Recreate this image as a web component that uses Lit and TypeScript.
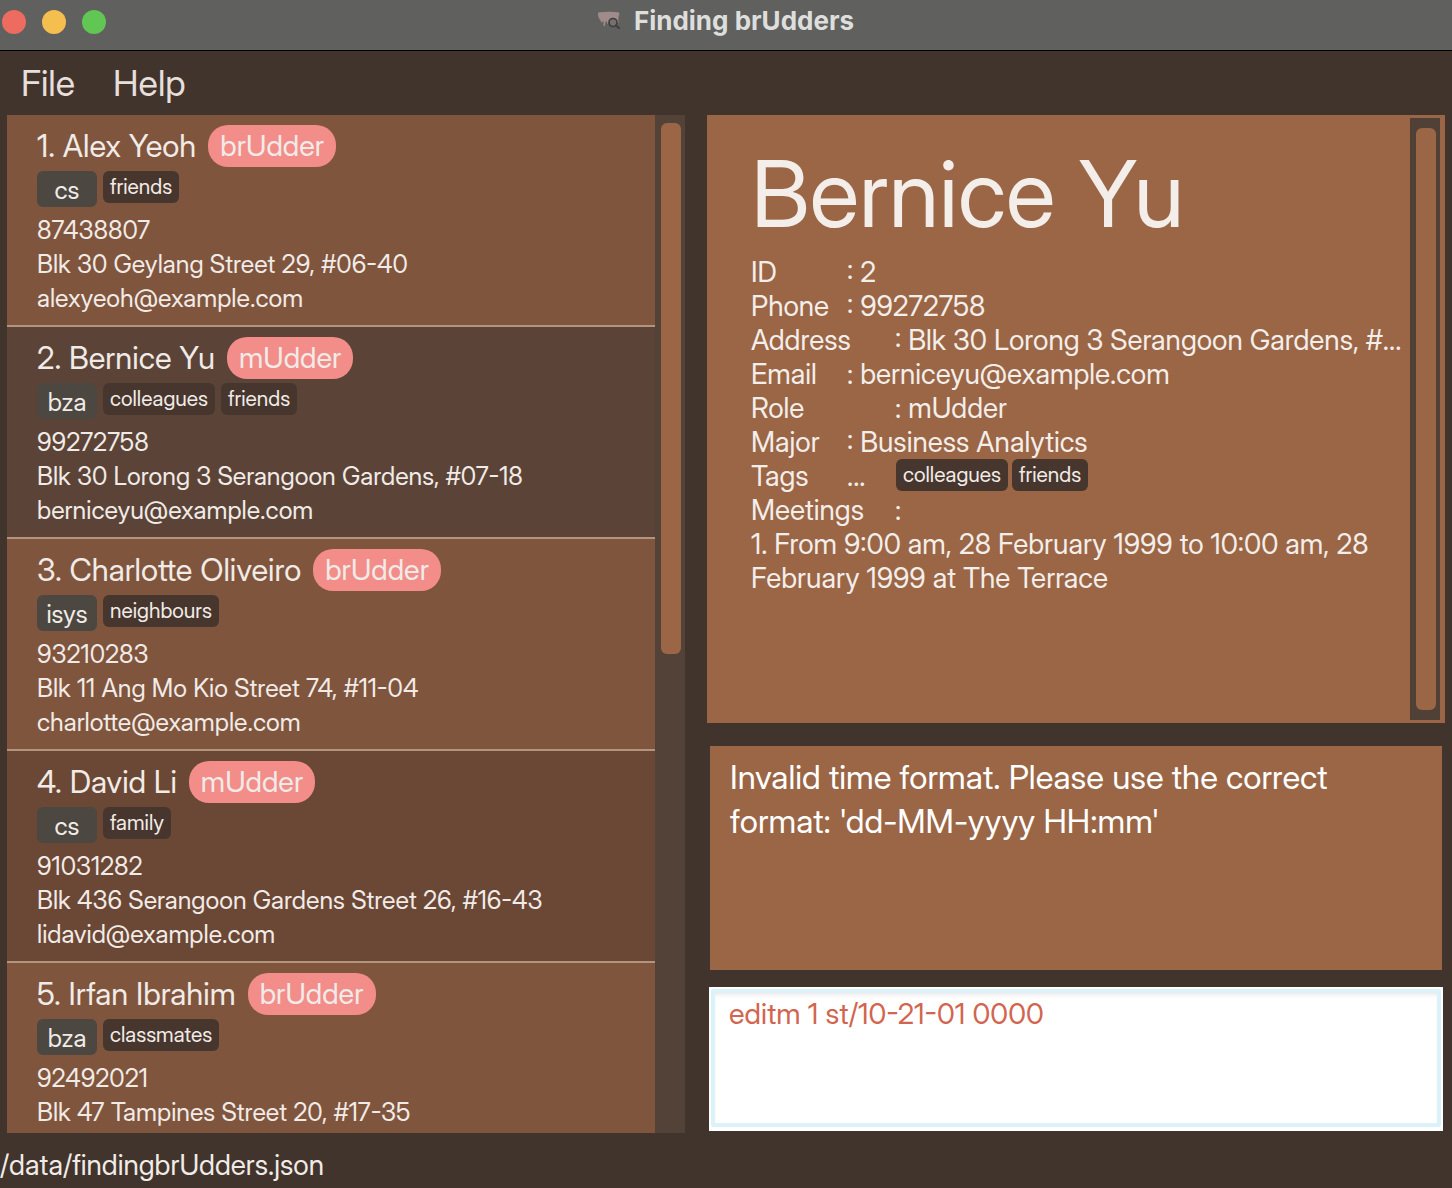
import { LitElement, html, css } from "lit";
import { customElement, property, state } from "lit/decorators.js";
import { classMap } from "lit/directives/class-map.js";

interface Person {
  name: string;
  role: string;
  major: string;
  tags: string[];
  phone: string;
  address: string;
  email?: string;
}

const PEOPLE: Person[] = [
  { name: "Alex Yeoh", role: "brUdder", major: "cs", tags: ["friends"], phone: "87438807", address: "Blk 30 Geylang Street 29, #06-40", email: "alexyeoh@example.com" },
  { name: "Bernice Yu", role: "mUdder", major: "bza", tags: ["colleagues", "friends"], phone: "99272758", address: "Blk 30 Lorong 3 Serangoon Gardens, #07-18", email: "berniceyu@example.com" },
  { name: "Charlotte Oliveiro", role: "brUdder", major: "isys", tags: ["neighbours"], phone: "93210283", address: "Blk 11 Ang Mo Kio Street 74, #11-04", email: "charlotte@example.com" },
  { name: "David Li", role: "mUdder", major: "cs", tags: ["family"], phone: "91031282", address: "Blk 436 Serangoon Gardens Street 26, #16-43", email: "lidavid@example.com" },
  { name: "Irfan Ibrahim", role: "brUdder", major: "bza", tags: ["classmates"], phone: "92492021", address: "Blk 47 Tampines Street 20, #17-35" },
];

@customElement("title-bar")
class TitleBar extends LitElement {
  static styles = css`
    :host {
      display: flex;
      align-items: center;
      height: 42px;
      padding: 0 2px 8px;
      background: #60615f;
      border-bottom: 1px solid #000;
      color: #dededd;
      font-family: Inter, "Liberation Sans", sans-serif;
    }
    .lights {
      display: flex;
      flex: 1;
      gap: 16px;
      padding-top: 2px;
    }
    .light {
      width: 24px;
      height: 24px;
      padding: 0;
      border: 0;
      border-radius: 50%;
    }
    .close { background: #ed6b5f; }
    .minimise { background: #f5bf4f; }
    .zoom { background: #62c655; }
    .title {
      display: flex;
      align-items: center;
      gap: 12px;
      margin: 0;
      font-size: 26px;
      line-height: 32px;
      font-weight: 700;
    }
    .balance { flex: 1; }
  `;
  render() {
    return html`
      <div class="lights">
        <button class="light close" aria-label="Close"></button>
        <button class="light minimise" aria-label="Minimise"></button>
        <button class="light zoom" aria-label="Zoom"></button>
      </div>
      <h1 class="title">
        <svg width="24" height="20" viewBox="0 0 24 20" aria-hidden="true">
          <path d="M0 2.500Q0 1.200 2 1.200Q11 .2 20 1.200Q22 1.500 21 4Q20 7 20.500 12H11Q10 12 9.500 13Q8.800 12 9 10.500H7.500L7 14.500Q6.200 15.800 5.500 14.500V10L3.500 11.500Q2.500 11 2.800 9.500Q0 7 0 2.500Z" fill="#a08b8b" />
          <circle cx="15" cy="11.500" r="4" fill="#76706f" stroke="#3f3f3e" stroke-width="1.700" />
          <path d="M18 14.500L21 17" stroke="#3f3f3e" stroke-width="2" stroke-linecap="round" />
        </svg>
        Finding brUdders
      </h1>
      <div class="balance"></div>
    `;
  }
}

@customElement("menu-bar")
class MenuBar extends LitElement {
  static styles = css`
    :host {
      display: flex;
      height: 64px;
      padding: 0 2px;
    }
    .menu {
      padding: 0 19px;
      border: 0;
      background: none;
      color: #e6dfdb;
      font: inherit;
      font-size: 36px;
      line-height: 62px;
    }
  `;
  render() {
    return html`<button class="menu">File</button><button class="menu">Help</button>`;
  }
}

@customElement("tag-chip")
class TagChip extends LitElement {
  @property() label = "";
  static styles = css`
    :host {
      display: block;
      padding: 0 7px;
      border-radius: 6px;
      background: #47362d;
      color: #f1ebe7;
      font-size: 21px;
      line-height: 32px;
    }
  `;
  render() {
    return html`${this.label}`;
  }
}

@customElement("person-card")
class PersonCard extends LitElement {
  @property({ attribute: false }) person!: Person;
  @property({ type: Number }) index = 0;
  static styles = css`
    :host {
      display: block;
      padding: 10px 30px;
      border-bottom: 2px solid #b3957d;
      color: #f1ebe7;
      white-space: nowrap;
    }
    .heading {
      display: flex;
      align-items: center;
      gap: 12px;
      height: 42px;
      margin-bottom: 4px;
    }
    .name {
      margin: 0;
      font-size: 31px;
      font-weight: 400;
      line-height: 42px;
    }
    .role {
      padding: 0 12px;
      border-radius: 20px;
      background: #f28d8a;
      font-size: 29px;
      line-height: 42px;
    }
    .tags {
      display: flex;
      align-items: flex-start;
      gap: 6px;
      margin-bottom: 6px;
    }
    .major {
      box-sizing: border-box;
      width: 60px;
      padding-top: 2px;
      border-radius: 6px;
      background: #4c4740;
      font-size: 25px;
      line-height: 34px;
      text-align: center;
    }
    .line {
      margin: 0;
      font-size: 25px;
      line-height: 34px;
    }
  `;
  render() {
    const p = this.person;
    return html`
      <div class="heading">
        <h2 class="name">${this.index}. ${p.name}</h2>
        <span class="role">${p.role}</span>
      </div>
      <div class="tags">
        <span class="major">${p.major}</span>
        ${p.tags.map((t) => html`<tag-chip label=${t}></tag-chip>`)}
      </div>
      <p class="line">${p.phone}</p>
      <p class="line">${p.address}</p>
      ${p.email ? html`<p class="line">${p.email}</p>` : ""}
    `;
  }
}

@customElement("person-detail")
class PersonDetail extends LitElement {
  static styles = css`
    :host {
      display: flex;
      gap: 4px;
      min-height: 0;
      padding: 3px 5px 3px 44px;
      background: #9a6646;
      color: #f4eeea;
    }
    .content {
      flex: 1;
      min-width: 0;
      padding-top: 22px;
      font-size: 28px;
      line-height: 34px;
    }
    .name {
      margin: 0;
      font-size: 92px;
      font-weight: 400;
      line-height: 108px;
      padding-bottom: 7px;
    }
    .fields { margin: 0; }
    .field { display: flex; }
    .label { min-width: 96px; }
    .wide { min-width: 144px; }
    .value {
      margin: 0;
      white-space: nowrap;
    }
    .more { min-width: 45px; }
    .tags {
      display: flex;
      align-items: flex-start;
      gap: 4px;
      margin: 0;
    }
    .meetings { margin: 0; }
    .track {
      padding: 10px 4px 10px 6px;
      background: #504036;
    }
    .thumb {
      width: 20px;
      height: 100%;
      border-radius: 6px;
      background: #9a6646;
    }
  `;
  private field(label: string, value: string, wide = false) {
    return html`<div class="field">
      <dt class=${classMap({ label: true, wide })}>${label}</dt>
      <dd class="value">: ${value}</dd>
    </div>`;
  }
  render() {
    const p = PEOPLE[1];
    return html`
      <div class="content">
        <h2 class="name">${p.name}</h2>
        <dl class="fields">
          ${this.field("ID", "2")}
          ${this.field("Phone", p.phone)}
          ${this.field("Address", "Blk 30 Lorong 3 Serangoon Gardens, #...", true)}
          ${this.field("Email", p.email ?? "")}
          ${this.field("Role", p.role, true)}
          ${this.field("Major", "Business Analytics")}
          <div class="field">
            <dt class="label">Tags</dt>
            <dd class="tags"><span class="more">...</span>${p.tags.map((t) => html`<tag-chip label=${t}></tag-chip>`)}</dd>
          </div>
          ${this.field("Meetings", "", true)}
        </dl>
        <p class="meetings">1. From 9:00 am, 28 February 1999 to 10:00 am, 28 February 1999 at The Terrace</p>
      </div>
      <div class="track"><div class="thumb"></div></div>
    `;
  }
}

@customElement("app-root")
class AppRoot extends LitElement {
  @state() private command = "editm 1 st/10-21-01 0000";
  static styles = css`
    :host {
      display: flex;
      flex-direction: column;
      height: 100vh;
      overflow: hidden;
      background: #41342c;
      font-family: "Inter Display", Inter, "Liberation Sans", sans-serif;
    }
    .main {
      display: grid;
      grid-template-columns: 678fr 738fr;
      gap: 22px;
      flex: 1;
      min-height: 0;
      padding: 0 7px;
    }
    .people {
      display: flex;
      min-height: 0;
      overflow: hidden;
    }
    .list {
      flex: 1;
      min-width: 0;
      margin: 0;
      padding: 0;
      overflow: hidden;
      list-style: none;
    }
    .item { background: #80553d; }
    .even { background: #6b4735; }
    .selected { background: #5b4437; }
    .track {
      padding: 8px 4px 8px 6px;
      background: #524237;
    }
    .thumb {
      width: 20px;
      height: 53%;
      border-radius: 6px;
      background: #9a6646;
    }
    .side {
      display: flex;
      flex-direction: column;
      min-width: 0;
      min-height: 0;
    }
    .detail { flex: 1; }
    .result {
      box-sizing: border-box;
      flex: 0 0 224px;
      margin: 23px 3px 17px;
      padding: 9px 20px;
      background: #9a6646;
      color: #fff;
      font-size: 33px;
      line-height: 44px;
    }
    .command {
      box-sizing: border-box;
      flex: 0 0 144px;
      margin: 0 2px 2px;
      padding: 2px 2px 4px;
      background: #fff;
    }
    .entry {
      display: block;
      box-sizing: border-box;
      width: 100%;
      height: 100%;
      padding: 4px 14px;
      border: 4px solid #dcf2f9;
      border-radius: 2px;
      outline: 0;
      background: #fff;
      box-shadow: inset 0 4px 4px -2px #eee8e8;
      color: #d2654f;
      font: inherit;
      font-size: 29px;
      line-height: 34px;
      resize: none;
      overflow: hidden;
    }
    .status {
      height: 55px;
      color: #f1ebe7;
      font-size: 28px;
      line-height: 64px;
    }
  `;
  private onInput(e: Event) {
    this.command = (e.target as HTMLTextAreaElement).value;
  }
  render() {
    return html`
      <title-bar></title-bar>
      <menu-bar></menu-bar>
      <main class="main">
        <section class="people" aria-label="Persons">
          <ul class="list">
            ${PEOPLE.map(
              (p, i) => html`<li class=${classMap({ item: true, even: i % 2 === 1, selected: i === 1 })}>
                <person-card .person=${p} .index=${i + 1}></person-card>
              </li>`,
            )}
          </ul>
          <div class="track"><div class="thumb"></div></div>
        </section>
        <div class="side">
          <person-detail class="detail"></person-detail>
          <div class="result" role="status">Invalid time format. Please use the correct format: 'dd-MM-yyyy HH:mm'</div>
          <div class="command">
            <textarea class="entry" aria-label="Command" spellcheck="false" .value=${this.command} @input=${this.onInput}></textarea>
          </div>
        </div>
      </main>
      <footer class="status">/data/findingbrUdders.json</footer>
    `;
  }
}
